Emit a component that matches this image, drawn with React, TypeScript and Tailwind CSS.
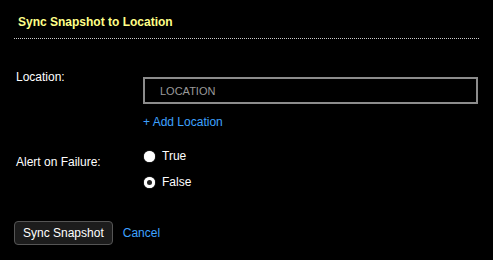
import { useState } from "react";

export default function App() {
  const [alert, setAlert] = useState("false");

  return (
    <div className="w-[493px] h-[260px] bg-black text-white text-[12px] font-['Liberation_Sans',Arial,sans-serif] overflow-hidden">
      <div className="pl-[18px] pt-[13px] h-[38px] font-bold text-[12px] text-[#ffff88]">
        Sync Snapshot to Location
      </div>
      <div className="ml-[14px] mr-[14px] border-t border-dotted border-[#cccccc]" />

      <div className="flex mt-[31px] pl-[16px] leading-[14px]">
        <div className="w-[127px]">Location:</div>
        <div className="flex flex-col pt-[7px]">
          <div className="w-[335px] h-[27px] border-2 border-[#8c8c8c] flex items-center pl-[15px] text-[#9a9a9a] text-[11px]">
            LOCATION
          </div>
          <a className="mt-[11px] text-[#3ea2ff] cursor-pointer">+ Add Location</a>
        </div>
      </div>

      <div className="flex mt-[20px] pl-[16px] leading-[14px]">
        <div className="w-[128px] pt-[6px]">Alert on Failure:</div>
        <div className="flex flex-col gap-[12px]">
          {["True", "False"].map((v) => (
            <label key={v} className="flex items-center gap-[7px] cursor-pointer" onClick={() => setAlert(v.toLowerCase())}>
              <span
                className={
                  alert === v.toLowerCase()
                    ? "w-[11px] h-[11px] rounded-full bg-white flex items-center justify-center shadow-[0_0_1px_#fff]"
                    : "w-[11px] h-[11px] rounded-full bg-white shadow-[0_0_1px_#fff]"
                }
              >
                {alert === v.toLowerCase() && <span className="w-[5px] h-[5px] rounded-full bg-[#222]" />}
              </span>
              <span>{v}</span>
            </label>
          ))}
        </div>
      </div>

      <div className="flex items-center mt-[32px] pl-[14px] gap-[10px]">
        <button className="h-[24px] px-[8px] rounded-[4px] bg-[#1c1c1c] border border-[#555] text-white text-[12px]">
          Sync Snapshot
        </button>
        <a className="text-[#3ea2ff] cursor-pointer">Cancel</a>
      </div>
    </div>
  );
}
